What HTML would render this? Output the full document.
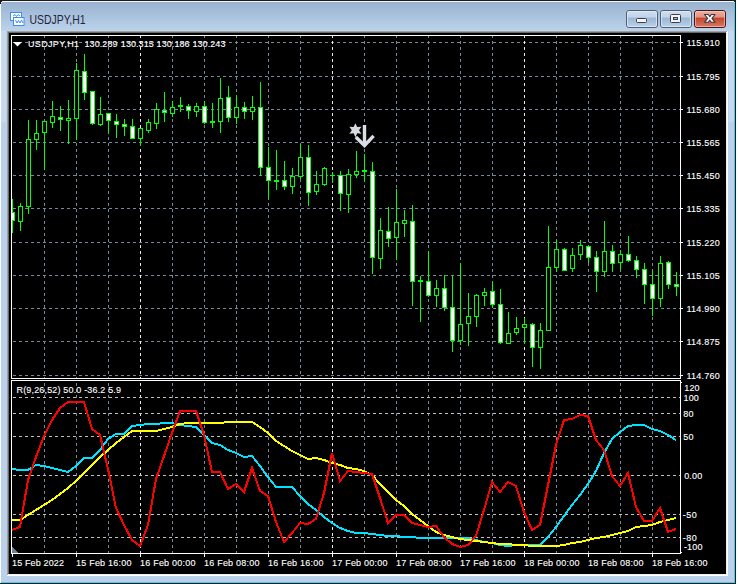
<!DOCTYPE html><html><head><meta charset="utf-8"><style>html,body{margin:0;padding:0;background:#fff;overflow:hidden}svg{display:block}</style></head><body><svg width="738" height="584" viewBox="0 0 738 584" shape-rendering="crispEdges" font-family="Liberation Sans, sans-serif">
<defs>
<linearGradient id="tb" x1="0" y1="0" x2="0" y2="1"><stop offset="0" stop-color="#98b2d0"/><stop offset="1" stop-color="#bcd3eb"/></linearGradient>
<linearGradient id="btn" x1="0" y1="0" x2="0" y2="1"><stop offset="0" stop-color="#d2e0f0"/><stop offset="0.4" stop-color="#c0d3e9"/><stop offset="0.43" stop-color="#9ab6d4"/><stop offset="1" stop-color="#bcd2ea"/></linearGradient>
<linearGradient id="cls" x1="0" y1="0" x2="0" y2="1"><stop offset="0" stop-color="#eeb0a0"/><stop offset="0.4" stop-color="#e09282"/><stop offset="0.43" stop-color="#c4442a"/><stop offset="1" stop-color="#da7a66"/></linearGradient>
</defs>
<rect x="0" y="0" width="738" height="584" fill="#ffffff"/>
<rect x="0" y="0" width="736" height="584" fill="#b9d1ea"/>
<rect x="0" y="2" width="736" height="29" fill="url(#tb)"/>
<rect x="1" y="31" width="5" height="91" fill="#c6daef"/>
<rect x="729" y="31" width="5" height="91" fill="#c6daef"/>
<rect x="0" y="0" width="736" height="1" fill="#1c1c1c"/>
<rect x="1" y="1" width="734" height="1" fill="#f4f8fc"/>
<rect x="0" y="1" width="1" height="583" fill="#ffffff"/>
<rect x="735" y="0" width="1" height="584" fill="#1c1c1c"/>
<rect x="734" y="2" width="1" height="581" fill="#3cd0f0"/>
<rect x="0" y="583" width="736" height="1" fill="#1c1c1c"/>
<rect x="1" y="582" width="734" height="1" fill="#3cd0f0"/>
<rect x="0" y="1" width="2" height="1" fill="#1c1c1c"/>
<rect x="0" y="2" width="1" height="2" fill="#1c1c1c"/>
<rect x="1" y="2" width="1" height="1" fill="#e8eef6"/>
<rect x="734" y="1" width="2" height="1" fill="#1c1c1c"/>
<rect x="735" y="2" width="1" height="2" fill="#1c1c1c"/>
<rect x="734" y="2" width="1" height="1" fill="#a8e0f0"/>
<rect x="736" y="0" width="2" height="584" fill="#ffffff"/>
<rect x="7" y="31" width="720" height="1" fill="#a0a0a0"/>
<rect x="7" y="31" width="1" height="545" fill="#a0a0a0"/>
<rect x="8" y="32" width="718" height="1" fill="#696969"/>
<rect x="8" y="32" width="1" height="543" fill="#696969"/>
<rect x="726" y="32" width="1" height="543" fill="#f0f0f0"/>
<rect x="8" y="574" width="719" height="1" fill="#f0f0f0"/>
<rect x="727" y="31" width="1" height="545" fill="#ffffff"/>
<rect x="7" y="575" width="721" height="1" fill="#ffffff"/>
<rect x="9" y="33" width="717" height="541" fill="#000000"/>
<line x1="13" y1="42.5" x2="680" y2="42.5" stroke="#778899" stroke-width="1" stroke-dasharray="3 3" stroke-dashoffset="0"/>
<line x1="13" y1="76.5" x2="680" y2="76.5" stroke="#778899" stroke-width="1" stroke-dasharray="3 3" stroke-dashoffset="0"/>
<line x1="13" y1="109.5" x2="680" y2="109.5" stroke="#778899" stroke-width="1" stroke-dasharray="3 3" stroke-dashoffset="0"/>
<line x1="13" y1="142.5" x2="680" y2="142.5" stroke="#778899" stroke-width="1" stroke-dasharray="3 3" stroke-dashoffset="0"/>
<line x1="13" y1="175.5" x2="680" y2="175.5" stroke="#778899" stroke-width="1" stroke-dasharray="3 3" stroke-dashoffset="0"/>
<line x1="13" y1="208.5" x2="680" y2="208.5" stroke="#778899" stroke-width="1" stroke-dasharray="3 3" stroke-dashoffset="0"/>
<line x1="13" y1="242.5" x2="680" y2="242.5" stroke="#778899" stroke-width="1" stroke-dasharray="3 3" stroke-dashoffset="0"/>
<line x1="13" y1="275.5" x2="680" y2="275.5" stroke="#778899" stroke-width="1" stroke-dasharray="3 3" stroke-dashoffset="0"/>
<line x1="13" y1="308.5" x2="680" y2="308.5" stroke="#778899" stroke-width="1" stroke-dasharray="3 3" stroke-dashoffset="0"/>
<line x1="13" y1="341.5" x2="680" y2="341.5" stroke="#778899" stroke-width="1" stroke-dasharray="3 3" stroke-dashoffset="0"/>
<line x1="13" y1="375.5" x2="680" y2="375.5" stroke="#778899" stroke-width="1" stroke-dasharray="3 3" stroke-dashoffset="0"/>
<line x1="44.5" y1="35" x2="44.5" y2="378" stroke="#778899" stroke-width="1" stroke-dasharray="3 3" stroke-dashoffset="0"/>
<line x1="44.5" y1="383" x2="44.5" y2="553" stroke="#778899" stroke-width="1" stroke-dasharray="3 3" stroke-dashoffset="0"/>
<line x1="76.5" y1="35" x2="76.5" y2="378" stroke="#778899" stroke-width="1" stroke-dasharray="3 3" stroke-dashoffset="0"/>
<line x1="76.5" y1="383" x2="76.5" y2="553" stroke="#778899" stroke-width="1" stroke-dasharray="3 3" stroke-dashoffset="0"/>
<line x1="108.5" y1="35" x2="108.5" y2="378" stroke="#778899" stroke-width="1" stroke-dasharray="3 3" stroke-dashoffset="0"/>
<line x1="108.5" y1="383" x2="108.5" y2="553" stroke="#778899" stroke-width="1" stroke-dasharray="3 3" stroke-dashoffset="0"/>
<line x1="172.5" y1="35" x2="172.5" y2="378" stroke="#778899" stroke-width="1" stroke-dasharray="3 3" stroke-dashoffset="0"/>
<line x1="172.5" y1="383" x2="172.5" y2="553" stroke="#778899" stroke-width="1" stroke-dasharray="3 3" stroke-dashoffset="0"/>
<line x1="204.5" y1="35" x2="204.5" y2="378" stroke="#778899" stroke-width="1" stroke-dasharray="3 3" stroke-dashoffset="0"/>
<line x1="204.5" y1="383" x2="204.5" y2="553" stroke="#778899" stroke-width="1" stroke-dasharray="3 3" stroke-dashoffset="0"/>
<line x1="236.5" y1="35" x2="236.5" y2="378" stroke="#778899" stroke-width="1" stroke-dasharray="3 3" stroke-dashoffset="0"/>
<line x1="236.5" y1="383" x2="236.5" y2="553" stroke="#778899" stroke-width="1" stroke-dasharray="3 3" stroke-dashoffset="0"/>
<line x1="268.5" y1="35" x2="268.5" y2="378" stroke="#778899" stroke-width="1" stroke-dasharray="3 3" stroke-dashoffset="0"/>
<line x1="268.5" y1="383" x2="268.5" y2="553" stroke="#778899" stroke-width="1" stroke-dasharray="3 3" stroke-dashoffset="0"/>
<line x1="300.5" y1="35" x2="300.5" y2="378" stroke="#778899" stroke-width="1" stroke-dasharray="3 3" stroke-dashoffset="0"/>
<line x1="300.5" y1="383" x2="300.5" y2="553" stroke="#778899" stroke-width="1" stroke-dasharray="3 3" stroke-dashoffset="0"/>
<line x1="364.5" y1="35" x2="364.5" y2="378" stroke="#778899" stroke-width="1" stroke-dasharray="3 3" stroke-dashoffset="0"/>
<line x1="364.5" y1="383" x2="364.5" y2="553" stroke="#778899" stroke-width="1" stroke-dasharray="3 3" stroke-dashoffset="0"/>
<line x1="396.5" y1="35" x2="396.5" y2="378" stroke="#778899" stroke-width="1" stroke-dasharray="3 3" stroke-dashoffset="0"/>
<line x1="396.5" y1="383" x2="396.5" y2="553" stroke="#778899" stroke-width="1" stroke-dasharray="3 3" stroke-dashoffset="0"/>
<line x1="428.5" y1="35" x2="428.5" y2="378" stroke="#778899" stroke-width="1" stroke-dasharray="3 3" stroke-dashoffset="0"/>
<line x1="428.5" y1="383" x2="428.5" y2="553" stroke="#778899" stroke-width="1" stroke-dasharray="3 3" stroke-dashoffset="0"/>
<line x1="460.5" y1="35" x2="460.5" y2="378" stroke="#778899" stroke-width="1" stroke-dasharray="3 3" stroke-dashoffset="0"/>
<line x1="460.5" y1="383" x2="460.5" y2="553" stroke="#778899" stroke-width="1" stroke-dasharray="3 3" stroke-dashoffset="0"/>
<line x1="492.5" y1="35" x2="492.5" y2="378" stroke="#778899" stroke-width="1" stroke-dasharray="3 3" stroke-dashoffset="0"/>
<line x1="492.5" y1="383" x2="492.5" y2="553" stroke="#778899" stroke-width="1" stroke-dasharray="3 3" stroke-dashoffset="0"/>
<line x1="556.5" y1="35" x2="556.5" y2="378" stroke="#778899" stroke-width="1" stroke-dasharray="3 3" stroke-dashoffset="0"/>
<line x1="556.5" y1="383" x2="556.5" y2="553" stroke="#778899" stroke-width="1" stroke-dasharray="3 3" stroke-dashoffset="0"/>
<line x1="588.5" y1="35" x2="588.5" y2="378" stroke="#778899" stroke-width="1" stroke-dasharray="3 3" stroke-dashoffset="0"/>
<line x1="588.5" y1="383" x2="588.5" y2="553" stroke="#778899" stroke-width="1" stroke-dasharray="3 3" stroke-dashoffset="0"/>
<line x1="620.5" y1="35" x2="620.5" y2="378" stroke="#778899" stroke-width="1" stroke-dasharray="3 3" stroke-dashoffset="0"/>
<line x1="620.5" y1="383" x2="620.5" y2="553" stroke="#778899" stroke-width="1" stroke-dasharray="3 3" stroke-dashoffset="0"/>
<line x1="652.5" y1="35" x2="652.5" y2="378" stroke="#778899" stroke-width="1" stroke-dasharray="3 3" stroke-dashoffset="0"/>
<line x1="652.5" y1="383" x2="652.5" y2="553" stroke="#778899" stroke-width="1" stroke-dasharray="3 3" stroke-dashoffset="0"/>
<line x1="140.5" y1="35" x2="140.5" y2="378" stroke="#e8e8e8" stroke-width="1" stroke-dasharray="3 3" stroke-dashoffset="0"/>
<line x1="140.5" y1="383" x2="140.5" y2="553" stroke="#e8e8e8" stroke-width="1" stroke-dasharray="3 3" stroke-dashoffset="0"/>
<line x1="332.5" y1="35" x2="332.5" y2="378" stroke="#e8e8e8" stroke-width="1" stroke-dasharray="3 3" stroke-dashoffset="0"/>
<line x1="332.5" y1="383" x2="332.5" y2="553" stroke="#e8e8e8" stroke-width="1" stroke-dasharray="3 3" stroke-dashoffset="0"/>
<line x1="524.5" y1="35" x2="524.5" y2="378" stroke="#e8e8e8" stroke-width="1" stroke-dasharray="3 3" stroke-dashoffset="0"/>
<line x1="524.5" y1="383" x2="524.5" y2="553" stroke="#e8e8e8" stroke-width="1" stroke-dasharray="3 3" stroke-dashoffset="0"/>
<line x1="13" y1="397.5" x2="680" y2="397.5" stroke="#c0c0c0" stroke-width="1" stroke-dasharray="3 3" stroke-dashoffset="0"/>
<line x1="13" y1="413.5" x2="680" y2="413.5" stroke="#c0c0c0" stroke-width="1" stroke-dasharray="3 3" stroke-dashoffset="0"/>
<line x1="13" y1="436.5" x2="680" y2="436.5" stroke="#c0c0c0" stroke-width="1" stroke-dasharray="3 3" stroke-dashoffset="0"/>
<line x1="13" y1="475.5" x2="680" y2="475.5" stroke="#c0c0c0" stroke-width="1" stroke-dasharray="3 3" stroke-dashoffset="0"/>
<line x1="13" y1="514.5" x2="680" y2="514.5" stroke="#c0c0c0" stroke-width="1" stroke-dasharray="3 3" stroke-dashoffset="0"/>
<line x1="13" y1="537.5" x2="680" y2="537.5" stroke="#c0c0c0" stroke-width="1" stroke-dasharray="3 3" stroke-dashoffset="0"/>
<rect x="12" y="199" width="1" height="34" fill="#00ff00"/>
<rect x="10" y="212" width="5" height="9" fill="#00ff00"/>
<rect x="11" y="213" width="3" height="7" fill="#ffffff"/>
<rect x="20" y="203" width="1" height="28" fill="#00ff00"/>
<rect x="18" y="206" width="5" height="16" fill="#00ff00"/>
<rect x="19" y="207" width="3" height="14" fill="#000000"/>
<rect x="28" y="120" width="1" height="94" fill="#00ff00"/>
<rect x="26" y="139" width="5" height="68" fill="#00ff00"/>
<rect x="27" y="140" width="3" height="66" fill="#000000"/>
<rect x="36" y="120" width="1" height="30" fill="#00ff00"/>
<rect x="34" y="133" width="5" height="7" fill="#00ff00"/>
<rect x="35" y="134" width="3" height="5" fill="#000000"/>
<rect x="44" y="121" width="1" height="49" fill="#00ff00"/>
<rect x="42" y="121" width="5" height="12" fill="#00ff00"/>
<rect x="43" y="122" width="3" height="10" fill="#000000"/>
<rect x="52" y="101" width="1" height="27" fill="#00ff00"/>
<rect x="50" y="116" width="5" height="7" fill="#00ff00"/>
<rect x="51" y="117" width="3" height="5" fill="#000000"/>
<rect x="60" y="106" width="1" height="25" fill="#00ff00"/>
<rect x="58" y="117" width="5" height="3" fill="#00ff00"/>
<rect x="59" y="118" width="3" height="1" fill="#ffffff"/>
<rect x="68" y="100" width="1" height="44" fill="#00ff00"/>
<rect x="66" y="118" width="5" height="3" fill="#00ff00"/>
<rect x="67" y="119" width="3" height="1" fill="#000000"/>
<rect x="76" y="63" width="1" height="77" fill="#00ff00"/>
<rect x="74" y="70" width="5" height="49" fill="#00ff00"/>
<rect x="75" y="71" width="3" height="47" fill="#000000"/>
<rect x="84" y="54" width="1" height="46" fill="#00ff00"/>
<rect x="82" y="71" width="5" height="22" fill="#00ff00"/>
<rect x="83" y="72" width="3" height="20" fill="#ffffff"/>
<rect x="92" y="91" width="1" height="34" fill="#00ff00"/>
<rect x="90" y="91" width="5" height="33" fill="#00ff00"/>
<rect x="91" y="92" width="3" height="31" fill="#ffffff"/>
<rect x="100" y="97" width="1" height="29" fill="#00ff00"/>
<rect x="98" y="114" width="5" height="11" fill="#00ff00"/>
<rect x="99" y="115" width="3" height="9" fill="#000000"/>
<rect x="108" y="113" width="1" height="20" fill="#00ff00"/>
<rect x="106" y="113" width="5" height="8" fill="#00ff00"/>
<rect x="107" y="114" width="3" height="6" fill="#ffffff"/>
<rect x="116" y="114" width="1" height="24" fill="#00ff00"/>
<rect x="114" y="121" width="5" height="4" fill="#00ff00"/>
<rect x="115" y="122" width="3" height="2" fill="#ffffff"/>
<rect x="124" y="119" width="1" height="17" fill="#00ff00"/>
<rect x="122" y="124" width="5" height="3" fill="#00ff00"/>
<rect x="123" y="125" width="3" height="1" fill="#ffffff"/>
<rect x="132" y="119" width="1" height="20" fill="#00ff00"/>
<rect x="130" y="126" width="5" height="13" fill="#00ff00"/>
<rect x="131" y="127" width="3" height="11" fill="#ffffff"/>
<rect x="140" y="128" width="1" height="18" fill="#00ff00"/>
<rect x="138" y="128" width="5" height="11" fill="#00ff00"/>
<rect x="139" y="129" width="3" height="9" fill="#000000"/>
<rect x="148" y="119" width="1" height="14" fill="#00ff00"/>
<rect x="146" y="122" width="5" height="9" fill="#00ff00"/>
<rect x="147" y="123" width="3" height="7" fill="#000000"/>
<rect x="156" y="103" width="1" height="26" fill="#00ff00"/>
<rect x="154" y="109" width="5" height="15" fill="#00ff00"/>
<rect x="155" y="110" width="3" height="13" fill="#000000"/>
<rect x="164" y="92" width="1" height="30" fill="#00ff00"/>
<rect x="162" y="110" width="5" height="3" fill="#00ff00"/>
<rect x="163" y="111" width="3" height="1" fill="#ffffff"/>
<rect x="172" y="101" width="1" height="16" fill="#00ff00"/>
<rect x="170" y="107" width="5" height="7" fill="#00ff00"/>
<rect x="171" y="108" width="3" height="5" fill="#000000"/>
<rect x="180" y="97" width="1" height="15" fill="#00ff00"/>
<rect x="178" y="105" width="5" height="2" fill="#00ff00"/>
<rect x="188" y="104" width="1" height="15" fill="#00ff00"/>
<rect x="186" y="106" width="5" height="5" fill="#00ff00"/>
<rect x="187" y="107" width="3" height="3" fill="#ffffff"/>
<rect x="196" y="103" width="1" height="14" fill="#00ff00"/>
<rect x="194" y="106" width="5" height="6" fill="#00ff00"/>
<rect x="195" y="107" width="3" height="4" fill="#000000"/>
<rect x="204" y="101" width="1" height="23" fill="#00ff00"/>
<rect x="202" y="106" width="5" height="17" fill="#00ff00"/>
<rect x="203" y="107" width="3" height="15" fill="#ffffff"/>
<rect x="212" y="103" width="1" height="25" fill="#00ff00"/>
<rect x="210" y="121" width="5" height="2" fill="#00ff00"/>
<rect x="220" y="78" width="1" height="55" fill="#00ff00"/>
<rect x="218" y="98" width="5" height="24" fill="#00ff00"/>
<rect x="219" y="99" width="3" height="22" fill="#000000"/>
<rect x="228" y="86" width="1" height="36" fill="#00ff00"/>
<rect x="226" y="97" width="5" height="21" fill="#00ff00"/>
<rect x="227" y="98" width="3" height="19" fill="#ffffff"/>
<rect x="236" y="95" width="1" height="29" fill="#00ff00"/>
<rect x="234" y="107" width="5" height="11" fill="#00ff00"/>
<rect x="235" y="108" width="3" height="9" fill="#000000"/>
<rect x="244" y="102" width="1" height="17" fill="#00ff00"/>
<rect x="242" y="107" width="5" height="5" fill="#00ff00"/>
<rect x="243" y="108" width="3" height="3" fill="#ffffff"/>
<rect x="252" y="96" width="1" height="24" fill="#00ff00"/>
<rect x="250" y="107" width="5" height="5" fill="#00ff00"/>
<rect x="251" y="108" width="3" height="3" fill="#000000"/>
<rect x="260" y="82" width="1" height="94" fill="#00ff00"/>
<rect x="258" y="107" width="5" height="61" fill="#00ff00"/>
<rect x="259" y="108" width="3" height="59" fill="#ffffff"/>
<rect x="268" y="147" width="1" height="52" fill="#00ff00"/>
<rect x="266" y="167" width="5" height="14" fill="#00ff00"/>
<rect x="267" y="168" width="3" height="12" fill="#ffffff"/>
<rect x="276" y="150" width="1" height="40" fill="#00ff00"/>
<rect x="274" y="180" width="5" height="2" fill="#00ff00"/>
<rect x="284" y="161" width="1" height="29" fill="#00ff00"/>
<rect x="282" y="180" width="5" height="7" fill="#00ff00"/>
<rect x="283" y="181" width="3" height="5" fill="#ffffff"/>
<rect x="292" y="168" width="1" height="26" fill="#00ff00"/>
<rect x="290" y="176" width="5" height="11" fill="#00ff00"/>
<rect x="291" y="177" width="3" height="9" fill="#000000"/>
<rect x="300" y="144" width="1" height="35" fill="#00ff00"/>
<rect x="298" y="157" width="5" height="20" fill="#00ff00"/>
<rect x="299" y="158" width="3" height="18" fill="#000000"/>
<rect x="308" y="145" width="1" height="61" fill="#00ff00"/>
<rect x="306" y="157" width="5" height="36" fill="#00ff00"/>
<rect x="307" y="158" width="3" height="34" fill="#ffffff"/>
<rect x="316" y="171" width="1" height="24" fill="#00ff00"/>
<rect x="314" y="184" width="5" height="8" fill="#00ff00"/>
<rect x="315" y="185" width="3" height="6" fill="#000000"/>
<rect x="324" y="167" width="1" height="19" fill="#00ff00"/>
<rect x="322" y="168" width="5" height="17" fill="#00ff00"/>
<rect x="323" y="169" width="3" height="15" fill="#000000"/>
<rect x="332" y="172" width="1" height="11" fill="#00ff00"/>
<rect x="330" y="175" width="5" height="1" fill="#00ff00"/>
<rect x="340" y="171" width="1" height="40" fill="#00ff00"/>
<rect x="338" y="175" width="5" height="19" fill="#00ff00"/>
<rect x="339" y="176" width="3" height="17" fill="#ffffff"/>
<rect x="348" y="169" width="1" height="44" fill="#00ff00"/>
<rect x="346" y="174" width="5" height="21" fill="#00ff00"/>
<rect x="347" y="175" width="3" height="19" fill="#000000"/>
<rect x="356" y="151" width="1" height="27" fill="#00ff00"/>
<rect x="354" y="171" width="5" height="4" fill="#00ff00"/>
<rect x="355" y="172" width="3" height="2" fill="#000000"/>
<rect x="364" y="154" width="1" height="28" fill="#00ff00"/>
<rect x="362" y="170" width="5" height="2" fill="#00ff00"/>
<rect x="372" y="162" width="1" height="112" fill="#00ff00"/>
<rect x="370" y="171" width="5" height="87" fill="#00ff00"/>
<rect x="371" y="172" width="3" height="85" fill="#ffffff"/>
<rect x="380" y="218" width="1" height="51" fill="#00ff00"/>
<rect x="378" y="230" width="5" height="29" fill="#00ff00"/>
<rect x="379" y="231" width="3" height="27" fill="#000000"/>
<rect x="388" y="207" width="1" height="40" fill="#00ff00"/>
<rect x="386" y="231" width="5" height="8" fill="#00ff00"/>
<rect x="387" y="232" width="3" height="6" fill="#ffffff"/>
<rect x="396" y="189" width="1" height="71" fill="#00ff00"/>
<rect x="394" y="222" width="5" height="16" fill="#00ff00"/>
<rect x="395" y="223" width="3" height="14" fill="#000000"/>
<rect x="404" y="210" width="1" height="27" fill="#00ff00"/>
<rect x="402" y="220" width="5" height="4" fill="#00ff00"/>
<rect x="403" y="221" width="3" height="2" fill="#000000"/>
<rect x="412" y="205" width="1" height="101" fill="#00ff00"/>
<rect x="410" y="221" width="5" height="61" fill="#00ff00"/>
<rect x="411" y="222" width="3" height="59" fill="#ffffff"/>
<rect x="420" y="276" width="1" height="46" fill="#00ff00"/>
<rect x="418" y="280" width="5" height="2" fill="#00ff00"/>
<rect x="428" y="251" width="1" height="46" fill="#00ff00"/>
<rect x="426" y="281" width="5" height="15" fill="#00ff00"/>
<rect x="427" y="282" width="3" height="13" fill="#ffffff"/>
<rect x="436" y="280" width="1" height="27" fill="#00ff00"/>
<rect x="434" y="288" width="5" height="8" fill="#00ff00"/>
<rect x="435" y="289" width="3" height="6" fill="#000000"/>
<rect x="444" y="275" width="1" height="36" fill="#00ff00"/>
<rect x="442" y="288" width="5" height="20" fill="#00ff00"/>
<rect x="443" y="289" width="3" height="18" fill="#ffffff"/>
<rect x="452" y="275" width="1" height="77" fill="#00ff00"/>
<rect x="450" y="307" width="5" height="34" fill="#00ff00"/>
<rect x="451" y="308" width="3" height="32" fill="#ffffff"/>
<rect x="460" y="263" width="1" height="82" fill="#00ff00"/>
<rect x="458" y="324" width="5" height="17" fill="#00ff00"/>
<rect x="459" y="325" width="3" height="15" fill="#000000"/>
<rect x="468" y="293" width="1" height="53" fill="#00ff00"/>
<rect x="466" y="316" width="5" height="8" fill="#00ff00"/>
<rect x="467" y="317" width="3" height="6" fill="#000000"/>
<rect x="476" y="294" width="1" height="33" fill="#00ff00"/>
<rect x="474" y="295" width="5" height="22" fill="#00ff00"/>
<rect x="475" y="296" width="3" height="20" fill="#000000"/>
<rect x="484" y="288" width="1" height="18" fill="#00ff00"/>
<rect x="482" y="292" width="5" height="4" fill="#00ff00"/>
<rect x="483" y="293" width="3" height="2" fill="#000000"/>
<rect x="492" y="282" width="1" height="26" fill="#00ff00"/>
<rect x="490" y="291" width="5" height="14" fill="#00ff00"/>
<rect x="491" y="292" width="3" height="12" fill="#ffffff"/>
<rect x="500" y="289" width="1" height="55" fill="#00ff00"/>
<rect x="498" y="304" width="5" height="39" fill="#00ff00"/>
<rect x="499" y="305" width="3" height="37" fill="#ffffff"/>
<rect x="508" y="312" width="1" height="32" fill="#00ff00"/>
<rect x="506" y="333" width="5" height="11" fill="#00ff00"/>
<rect x="507" y="334" width="3" height="9" fill="#000000"/>
<rect x="516" y="317" width="1" height="18" fill="#00ff00"/>
<rect x="514" y="328" width="5" height="5" fill="#00ff00"/>
<rect x="515" y="329" width="3" height="3" fill="#000000"/>
<rect x="524" y="318" width="1" height="26" fill="#00ff00"/>
<rect x="522" y="324" width="5" height="4" fill="#00ff00"/>
<rect x="523" y="325" width="3" height="2" fill="#000000"/>
<rect x="532" y="323" width="1" height="44" fill="#00ff00"/>
<rect x="530" y="324" width="5" height="24" fill="#00ff00"/>
<rect x="531" y="325" width="3" height="22" fill="#ffffff"/>
<rect x="540" y="323" width="1" height="46" fill="#00ff00"/>
<rect x="538" y="330" width="5" height="18" fill="#00ff00"/>
<rect x="539" y="331" width="3" height="16" fill="#000000"/>
<rect x="548" y="226" width="1" height="105" fill="#00ff00"/>
<rect x="546" y="267" width="5" height="64" fill="#00ff00"/>
<rect x="547" y="268" width="3" height="62" fill="#000000"/>
<rect x="556" y="240" width="1" height="32" fill="#00ff00"/>
<rect x="554" y="249" width="5" height="19" fill="#00ff00"/>
<rect x="555" y="250" width="3" height="17" fill="#000000"/>
<rect x="564" y="248" width="1" height="23" fill="#00ff00"/>
<rect x="562" y="249" width="5" height="22" fill="#00ff00"/>
<rect x="563" y="250" width="3" height="20" fill="#ffffff"/>
<rect x="572" y="248" width="1" height="24" fill="#00ff00"/>
<rect x="570" y="255" width="5" height="14" fill="#00ff00"/>
<rect x="571" y="256" width="3" height="12" fill="#000000"/>
<rect x="580" y="240" width="1" height="20" fill="#00ff00"/>
<rect x="578" y="245" width="5" height="10" fill="#00ff00"/>
<rect x="579" y="246" width="3" height="8" fill="#000000"/>
<rect x="588" y="245" width="1" height="18" fill="#00ff00"/>
<rect x="586" y="246" width="5" height="12" fill="#00ff00"/>
<rect x="587" y="247" width="3" height="10" fill="#ffffff"/>
<rect x="596" y="251" width="1" height="41" fill="#00ff00"/>
<rect x="594" y="257" width="5" height="15" fill="#00ff00"/>
<rect x="595" y="258" width="3" height="13" fill="#ffffff"/>
<rect x="604" y="221" width="1" height="56" fill="#00ff00"/>
<rect x="602" y="251" width="5" height="21" fill="#00ff00"/>
<rect x="603" y="252" width="3" height="19" fill="#000000"/>
<rect x="612" y="245" width="1" height="27" fill="#00ff00"/>
<rect x="610" y="251" width="5" height="13" fill="#00ff00"/>
<rect x="611" y="252" width="3" height="11" fill="#ffffff"/>
<rect x="620" y="250" width="1" height="20" fill="#00ff00"/>
<rect x="618" y="254" width="5" height="9" fill="#00ff00"/>
<rect x="619" y="255" width="3" height="7" fill="#000000"/>
<rect x="628" y="236" width="1" height="26" fill="#00ff00"/>
<rect x="626" y="254" width="5" height="7" fill="#00ff00"/>
<rect x="627" y="255" width="3" height="5" fill="#ffffff"/>
<rect x="636" y="256" width="1" height="22" fill="#00ff00"/>
<rect x="634" y="260" width="5" height="10" fill="#00ff00"/>
<rect x="635" y="261" width="3" height="8" fill="#ffffff"/>
<rect x="644" y="263" width="1" height="41" fill="#00ff00"/>
<rect x="642" y="269" width="5" height="16" fill="#00ff00"/>
<rect x="643" y="270" width="3" height="14" fill="#ffffff"/>
<rect x="652" y="270" width="1" height="46" fill="#00ff00"/>
<rect x="650" y="284" width="5" height="15" fill="#00ff00"/>
<rect x="651" y="285" width="3" height="13" fill="#ffffff"/>
<rect x="660" y="256" width="1" height="51" fill="#00ff00"/>
<rect x="658" y="263" width="5" height="36" fill="#00ff00"/>
<rect x="659" y="264" width="3" height="34" fill="#000000"/>
<rect x="668" y="261" width="1" height="28" fill="#00ff00"/>
<rect x="666" y="262" width="5" height="23" fill="#00ff00"/>
<rect x="667" y="263" width="3" height="21" fill="#ffffff"/>
<rect x="676" y="272" width="1" height="24" fill="#00ff00"/>
<rect x="674" y="284" width="5" height="3" fill="#00ff00"/>
<rect x="675" y="285" width="3" height="1" fill="#ffffff"/>
<polyline points="12,469 20,470 28,470 36,465 44,466 52,468 60,470 68,472 76,466 84,458 92,458 100,450 108,439 116,434 124,434 132,426 140,425 148,424 156,424 164,423 172,423 180,425 188,426 196,427 204,435 212,443 220,445 228,450 236,453 244,457 252,456 260,466 268,477 276,487 284,487 292,487 300,496 308,504 316,510 324,517 332,523 340,528 348,531 356,533 364,533 372,534 380,535 388,536 396,536 404,537 412,537 420,538 428,538 436,538 444,538 452,538 460,538 468,538 476,540 484,542 492,543 500,545 508,546 516,545 524,545 532,545 540,545 548,537 556,527 564,516 572,505 580,495 588,484 596,471 604,453 612,439 620,432 628,426 636,425 644,425 652,429 660,431 668,435 676,440" fill="none" stroke="#00e5ff" stroke-width="2" stroke-linejoin="miter"/>
<polyline points="12,520 20,520 28,515 36,510 44,505 52,500 60,494 68,488 76,481 84,473 92,465 100,457 108,450 116,443 124,437 132,431 140,431 148,431 156,431 164,429 172,427 180,424 188,423 196,423 204,423 212,423 220,423 228,422 236,422 244,422 252,422 260,427 268,433 276,441 284,446 292,451 300,455 308,459 316,458 324,460 332,463 340,465 348,468 356,469 364,471 372,475 380,484 388,492 396,500 404,506 412,514 420,520 428,526 436,532 444,535 452,537 460,539 468,540 476,541 484,542 492,543 500,544 508,544 516,545 524,545 532,546 540,546 548,546 556,546 564,545 572,543 580,542 588,540 596,538 604,537 612,535 620,533 628,531 636,527 644,526 652,525 660,522 668,520 676,518" fill="none" stroke="#ffff00" stroke-width="2" stroke-linejoin="miter"/>
<polyline points="12,530 20,527 28,480 36,457 44,436 52,420 60,408 68,402 76,402 84,402 92,429 100,435 108,469 116,508 124,525 132,540 140,546 148,525 156,479 164,456 172,433 180,411 188,411 196,411 204,435 212,472 220,472 228,489 236,484 244,492 252,468 260,491 268,496 276,522 284,542 292,533 300,523 308,524 316,519 324,493 332,453 340,481 348,471 356,472 364,473 372,474 380,498 388,523 396,515 404,515 412,523 420,525 428,527 436,526 444,537 452,544 460,547 468,545 476,536 484,510 492,482 500,492 508,482 516,486 524,512 532,530 540,525 548,485 556,445 564,420 572,419 580,415 588,416 596,440 604,450 612,476 620,486 628,473 636,507 644,521 652,521 660,508 668,532 676,529" fill="none" stroke="#ff0000" stroke-width="2" stroke-linejoin="miter"/>
<rect x="9" y="36" width="2" height="342" fill="#000000"/>
<rect x="11.5" y="35.5" width="669" height="343" fill="none" stroke="#ffffff" stroke-width="1"/>
<rect x="11.5" y="380.5" width="669" height="173" fill="none" stroke="#ffffff" stroke-width="1"/>
<rect x="681" y="42" width="2" height="1" fill="#ffffff"/>
<rect x="681" y="76" width="2" height="1" fill="#ffffff"/>
<rect x="681" y="109" width="2" height="1" fill="#ffffff"/>
<rect x="681" y="142" width="2" height="1" fill="#ffffff"/>
<rect x="681" y="175" width="2" height="1" fill="#ffffff"/>
<rect x="681" y="208" width="2" height="1" fill="#ffffff"/>
<rect x="681" y="242" width="2" height="1" fill="#ffffff"/>
<rect x="681" y="275" width="2" height="1" fill="#ffffff"/>
<rect x="681" y="308" width="2" height="1" fill="#ffffff"/>
<rect x="681" y="341" width="2" height="1" fill="#ffffff"/>
<rect x="681" y="375" width="2" height="1" fill="#ffffff"/>
<rect x="681" y="382" width="1" height="1" fill="#ffffff"/>
<rect x="681" y="552" width="1" height="1" fill="#ffffff"/>
<rect x="12" y="554" width="1" height="3" fill="#ffffff"/>
<rect x="76" y="554" width="1" height="3" fill="#ffffff"/>
<rect x="140" y="554" width="1" height="3" fill="#ffffff"/>
<rect x="204" y="554" width="1" height="3" fill="#ffffff"/>
<rect x="268" y="554" width="1" height="3" fill="#ffffff"/>
<rect x="332" y="554" width="1" height="3" fill="#ffffff"/>
<rect x="396" y="554" width="1" height="3" fill="#ffffff"/>
<rect x="460" y="554" width="1" height="3" fill="#ffffff"/>
<rect x="524" y="554" width="1" height="3" fill="#ffffff"/>
<rect x="588" y="554" width="1" height="3" fill="#ffffff"/>
<rect x="652" y="554" width="1" height="3" fill="#ffffff"/>
<text x="686.5" y="46" font-size="9" fill="#ffffff" stroke="#ffffff" stroke-width="0.12" textLength="33.3" lengthAdjust="spacing">115.910</text>
<text x="686.5" y="80" font-size="9" fill="#ffffff" stroke="#ffffff" stroke-width="0.12" textLength="33.3" lengthAdjust="spacing">115.795</text>
<text x="686.5" y="113" font-size="9" fill="#ffffff" stroke="#ffffff" stroke-width="0.12" textLength="33.3" lengthAdjust="spacing">115.680</text>
<text x="686.5" y="146" font-size="9" fill="#ffffff" stroke="#ffffff" stroke-width="0.12" textLength="33.3" lengthAdjust="spacing">115.565</text>
<text x="686.5" y="179" font-size="9" fill="#ffffff" stroke="#ffffff" stroke-width="0.12" textLength="33.3" lengthAdjust="spacing">115.450</text>
<text x="686.5" y="212" font-size="9" fill="#ffffff" stroke="#ffffff" stroke-width="0.12" textLength="33.3" lengthAdjust="spacing">115.335</text>
<text x="686.5" y="246" font-size="9" fill="#ffffff" stroke="#ffffff" stroke-width="0.12" textLength="33.3" lengthAdjust="spacing">115.220</text>
<text x="686.5" y="279" font-size="9" fill="#ffffff" stroke="#ffffff" stroke-width="0.12" textLength="33.3" lengthAdjust="spacing">115.105</text>
<text x="686.5" y="312" font-size="9" fill="#ffffff" stroke="#ffffff" stroke-width="0.12" textLength="33.3" lengthAdjust="spacing">114.990</text>
<text x="686.5" y="345" font-size="9" fill="#ffffff" stroke="#ffffff" stroke-width="0.12" textLength="33.3" lengthAdjust="spacing">114.875</text>
<text x="686.5" y="379" font-size="9" fill="#ffffff" stroke="#ffffff" stroke-width="0.12" textLength="33.3" lengthAdjust="spacing">114.760</text>
<text x="684.3" y="391" font-size="9" fill="#ffffff" stroke="#ffffff" stroke-width="0.12" textLength="15.3" lengthAdjust="spacing">120</text>
<text x="683.5" y="401" font-size="9" fill="#ffffff" stroke="#ffffff" stroke-width="0.12" textLength="15.3" lengthAdjust="spacing">100</text>
<text x="683.2" y="417" font-size="9" fill="#ffffff" stroke="#ffffff" stroke-width="0.12" textLength="10.3" lengthAdjust="spacing">80</text>
<text x="683.2" y="440" font-size="9" fill="#ffffff" stroke="#ffffff" stroke-width="0.12" textLength="10.3" lengthAdjust="spacing">50</text>
<text x="684.2" y="479" font-size="9" fill="#ffffff" stroke="#ffffff" stroke-width="0.12" textLength="18" lengthAdjust="spacing">0.00</text>
<text x="682.8" y="518" font-size="9" fill="#ffffff" stroke="#ffffff" stroke-width="0.12" textLength="14" lengthAdjust="spacing">-50</text>
<text x="682.8" y="541" font-size="9" fill="#ffffff" stroke="#ffffff" stroke-width="0.12" textLength="14" lengthAdjust="spacing">-80</text>
<text x="683.9" y="550" font-size="9" fill="#ffffff" stroke="#ffffff" stroke-width="0.12" textLength="18.5" lengthAdjust="spacing">-100</text>
<text x="12" y="566" font-size="9" fill="#ffffff" stroke="#ffffff" stroke-width="0.12" textLength="52" lengthAdjust="spacing">15 Feb 2022</text>
<text x="76" y="566" font-size="9" fill="#ffffff" stroke="#ffffff" stroke-width="0.12" textLength="55.5" lengthAdjust="spacing">15 Feb 16:00</text>
<text x="140" y="566" font-size="9" fill="#ffffff" stroke="#ffffff" stroke-width="0.12" textLength="55.5" lengthAdjust="spacing">16 Feb 00:00</text>
<text x="204" y="566" font-size="9" fill="#ffffff" stroke="#ffffff" stroke-width="0.12" textLength="55.5" lengthAdjust="spacing">16 Feb 08:00</text>
<text x="268" y="566" font-size="9" fill="#ffffff" stroke="#ffffff" stroke-width="0.12" textLength="55.5" lengthAdjust="spacing">16 Feb 16:00</text>
<text x="332" y="566" font-size="9" fill="#ffffff" stroke="#ffffff" stroke-width="0.12" textLength="55.5" lengthAdjust="spacing">17 Feb 00:00</text>
<text x="396" y="566" font-size="9" fill="#ffffff" stroke="#ffffff" stroke-width="0.12" textLength="55.5" lengthAdjust="spacing">17 Feb 08:00</text>
<text x="460" y="566" font-size="9" fill="#ffffff" stroke="#ffffff" stroke-width="0.12" textLength="55.5" lengthAdjust="spacing">17 Feb 16:00</text>
<text x="524" y="566" font-size="9" fill="#ffffff" stroke="#ffffff" stroke-width="0.12" textLength="55.5" lengthAdjust="spacing">18 Feb 00:00</text>
<text x="588" y="566" font-size="9" fill="#ffffff" stroke="#ffffff" stroke-width="0.12" textLength="55.5" lengthAdjust="spacing">18 Feb 08:00</text>
<text x="652" y="566" font-size="9" fill="#ffffff" stroke="#ffffff" stroke-width="0.12" textLength="55.5" lengthAdjust="spacing">18 Feb 16:00</text>
<polygon points="13,42 22,42 17.5,46.5" fill="#ffffff" shape-rendering="auto"/>
<text x="28" y="47" font-size="9" fill="#ffffff" stroke="#ffffff" stroke-width="0.12" textLength="51" lengthAdjust="spacing">USDJPY,H1</text>
<text x="84.5" y="47" font-size="9" fill="#ffffff" stroke="#ffffff" stroke-width="0.12" textLength="33" lengthAdjust="spacing">130.289</text>
<text x="120.8" y="47" font-size="9" fill="#ffffff" stroke="#ffffff" stroke-width="0.12" textLength="33" lengthAdjust="spacing">130.315</text>
<text x="156.6" y="47" font-size="9" fill="#ffffff" stroke="#ffffff" stroke-width="0.12" textLength="33" lengthAdjust="spacing">130.186</text>
<text x="192.4" y="47" font-size="9" fill="#ffffff" stroke="#ffffff" stroke-width="0.12" textLength="33" lengthAdjust="spacing">130.243</text>
<text x="16.5" y="393" font-size="9" fill="#ffffff" stroke="#ffffff" stroke-width="0.12" textLength="104.5" lengthAdjust="spacing">R(9,26,52) 50.0 -36.2 5.9</text>
<polygon points="12,547 12,553 18,553" fill="#708090"/>
<text x="29.5" y="24" font-size="12.5" fill="#1e2440" textLength="56" lengthAdjust="spacingAndGlyphs">USDJPY,H1</text>
<g shape-rendering="auto">
<rect x="10.5" y="12.5" width="11" height="8" fill="#ffffff" stroke="#3d8ef5" stroke-width="1"/>
<path d="M13 16 l2 -1.5 l1.5 2 l1.5 -2 l2 1.5" fill="none" stroke="#3d8ef5" stroke-width="1"/>
<rect x="13.5" y="17.5" width="10.5" height="8" fill="#ffffff" stroke="#3d8ef5" stroke-width="1"/>
<path d="M15.5 20 l1.5 3 l1.5 -2.5 l1.5 2.5 l1.5 -3 l1.5 3" fill="none" stroke="#3d8ef5" stroke-width="1"/>
</g>
<g shape-rendering="auto">
<rect x="626.5" y="10.5" width="31" height="17" rx="2.5" fill="url(#btn)" stroke="#4e5e74" stroke-width="1"/>
<rect x="627.5" y="11.5" width="29" height="15" rx="1.5" fill="none" stroke="#e6eef8" stroke-opacity="0.7" stroke-width="1"/>
<rect x="636.5" y="18.5" width="10" height="4" rx="1" fill="#f4f4f4" stroke="#3a3f4a" stroke-width="1"/>
<rect x="660.5" y="10.5" width="31" height="17" rx="2.5" fill="url(#btn)" stroke="#4e5e74" stroke-width="1"/>
<rect x="661.5" y="11.5" width="29" height="15" rx="1.5" fill="none" stroke="#e6eef8" stroke-opacity="0.7" stroke-width="1"/>
<rect x="670.5" y="14.5" width="10" height="8" rx="1" fill="#f4f4f4" stroke="#3a3f4a" stroke-width="1"/>
<rect x="673.5" y="17.5" width="4" height="2" fill="#9ab8dc" stroke="#3a3f4a" stroke-width="1"/>
<rect x="694.5" y="10.5" width="31" height="17" rx="2.5" fill="url(#cls)" stroke="#4a1418" stroke-width="1"/>
<rect x="695.5" y="11.5" width="29" height="15" rx="1.5" fill="none" stroke="#f8d0c8" stroke-opacity="0.6" stroke-width="1"/>
<polygon points="704.5,14.5 708.3,14.5 709.8,16.6 711.3,14.5 715.1,14.5 712,18.4 715.1,22.3 711.3,22.3 709.8,20.2 708.3,22.3 704.5,22.3 707.6,18.4" fill="#fafafa" stroke="#363848" stroke-width="1.1" stroke-linejoin="round"/>
</g>
<g shape-rendering="auto">
<polygon points="355.40,123.20 357.20,127.08 361.46,126.70 359.00,130.20 361.46,133.70 357.20,133.32 355.40,137.20 353.60,133.32 349.34,133.70 351.80,130.20 349.34,126.70 353.60,127.08" fill="#d8d8e0"/>
<path d="M364.5 125 L364.5 144" fill="none" stroke="#dcdce4" stroke-width="3.4"/>
<path d="M355.8 137 L364.5 145.5 L373.6 135.8" fill="none" stroke="#dcdce4" stroke-width="3.4" stroke-linejoin="miter"/>
</g>
</svg></body></html>
